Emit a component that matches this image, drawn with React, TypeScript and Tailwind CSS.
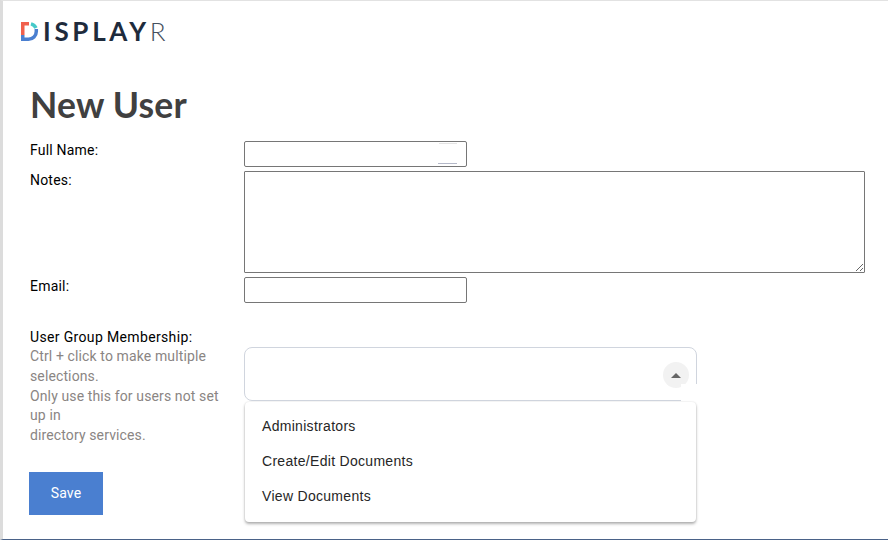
const groups = ['Administrators', 'Create/Edit Documents', 'View Documents']

function Logo() {
  return (
    <div className="flex items-center h-[22px] font-['Lato',sans-serif] text-[26px] leading-none text-[#1e2b3c]">
      <svg width="18" height="21" viewBox="0 0 18 21" className="shrink-0">
        <path d="M1.75 14V2.75H8" fill="none" stroke="#f0604d" strokeWidth="3.5" />
        <path d="M10 2.9A7.8 7.8 0 0 1 15 7" fill="none" stroke="#45c9c9" strokeWidth="3.5" />
        <path d="M0 18.2H7.5A7.8 7.8 0 0 0 15.3 10.4V8" fill="none" stroke="#4a7fd0" strokeWidth="3.5" />
        <rect x="0" y="14" width="3.5" height="6" fill="#4a7fd0" />
      </svg>
      <span className="ml-[4px] font-bold tracking-[3.7px]">ISPLAY</span>
      <span className="font-light text-[#45505e]">R</span>
    </div>
  )
}

export default function App() {
  return (
    <div className="h-[540px] w-[888px] overflow-hidden border-t border-t-[#e2e2e2] border-b border-b-[#4a6288] border-l-[3px] border-l-[#dcdcdc] bg-white font-['Roboto',sans-serif] text-[14px] tracking-[0.2px] text-black">
      <div className="pl-[18px] pt-[19px]">
        <Logo />
      </div>
      <div className="pl-[27px] pt-[43px]">
        <h1 className="font-['Lato',sans-serif] text-[35.5px] font-bold leading-[40px] text-[#404040]">New User</h1>

        <div className="mt-[16px] grid grid-cols-[214px_1fr] gap-y-[4px]">
          <label className="leading-[20px] -mt-px">Full Name:</label>
          <div className="relative h-[26px] w-[223px] rounded-[2px] border border-[#767676]">
            <div className="absolute right-[9px] top-[1px] h-px w-[18px] bg-[#e4e4e4]" />
            <div className="absolute bottom-[2px] right-[9px] h-px w-[19px] bg-[#b4b8c8]" />
          </div>

          <label className="leading-[20px] -mt-px">Notes:</label>
          <textarea className="block h-[102px] w-[621px] rounded-[1px] border border-[#767676] outline-none" />

          <label className="leading-[20px] -mt-px">Email:</label>
          <input className="h-[26px] w-[223px] rounded-[2px] border border-[#767676] outline-none" />
        </div>

        <div className="mt-[24px] grid grid-cols-[214px_1fr]">
          <div className="w-[194px]">
            <div className="leading-[20px] tracking-[0.35px]">User Group Membership:</div>
            <p className="tracking-[0.12px] leading-[19.8px] text-[#8a8583]">
              Ctrl + click to make multiple selections.
              <br />
              Only use this for users not set up in
              <br />
              directory services.
            </p>
            <button className="mt-[26px] block h-[43px] w-[74px] -ml-px bg-[#4a7fd0] text-[14px] text-white">Save</button>
          </div>

          <div className="relative mt-[20px] h-[54px] w-[453px] self-start rounded-[8px] border border-[#d0d5de]">
            <div className="absolute right-[7px] top-[14px] flex h-[26px] w-[26px] items-center justify-center rounded-full bg-[#f2f2f2]">
              <div className="h-0 w-0 border-x-[5px] border-b-[5px] border-x-transparent border-b-[#666]" />
            </div>
            <div className="absolute -right-px top-[36px] h-[18px] w-[16px] bg-white" />
            <ul className="absolute left-0 top-[54px] h-[120px] w-[451px] rounded-[4px] bg-white py-[7px] font-['Liberation_Sans',sans-serif] text-[14px] tracking-[0.3px] text-[#262626] shadow-[0_2px_3px_rgba(0,0,0,0.3),0_0_2px_rgba(0,0,0,0.12)]">
              {groups.map((g) => (
                <li key={g} className="flex h-[35px] items-center pl-[17px]">
                  {g}
                </li>
              ))}
            </ul>
          </div>
        </div>
      </div>
    </div>
  )
}
